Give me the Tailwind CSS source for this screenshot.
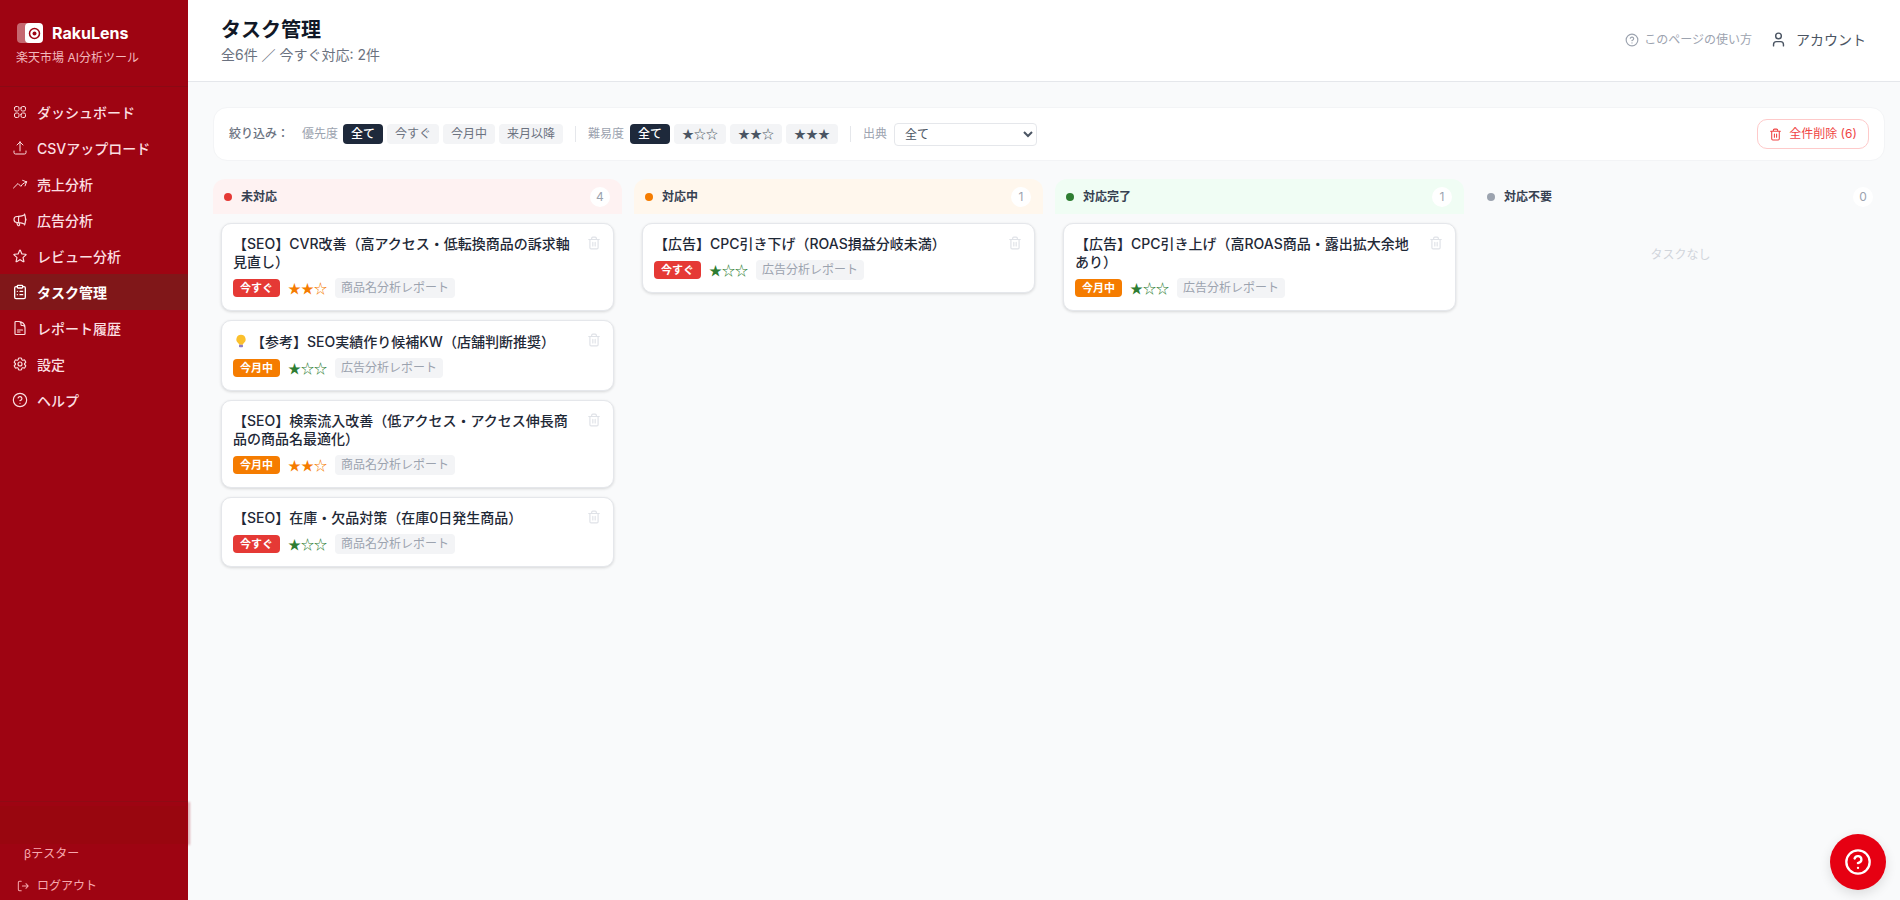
<!DOCTYPE html>
<html lang="ja">
<head>
<meta charset="utf-8">
<title>タスク管理</title>
<script src="https://cdn.jsdelivr.net/npm/@tailwindcss/browser@4"></script>
</head>
<body class="h-[900px] overflow-hidden bg-[#f9fafb] font-['Inter','Noto_Sans_CJK_JP',sans-serif] text-[#111827]">
<div class="relative flex h-[900px]">
  <aside class="flex h-full w-[188px] shrink-0 flex-col bg-[#9e0412] text-[#fde2e4]">
    <div class="h-[87px] shrink-0 border-b border-[#8a0a14] pl-[16px] pt-[23px]">
      <div class="ml-[1px] flex items-center gap-[9px]">
        <div class="relative h-[20px] w-[26px]">
          <div class="absolute left-0 top-0 h-[20px] w-[14px] rounded-[4px] bg-white/40"></div>
          <div class="absolute left-[8px] top-0 flex h-[20px] w-[18px] items-center justify-center rounded-[4px] bg-white">
            <svg viewBox="0 0 12 12" class="h-[13px] w-[13px]" fill="none"><circle cx="6" cy="6" r="4.6" stroke="#9e0412" stroke-width="1.4"/><circle cx="6" cy="6" r="1.8" fill="#9e0412"/></svg>
          </div>
        </div>
        <span class="text-[16px] font-bold leading-[20px] text-white">RakuLens</span>
      </div>
      <div class="mt-[7px] text-[12px] leading-[16px] text-[#f2b9bd]">楽天市場 AI分析ツール</div>
    </div>
    <nav class="flex flex-col pt-[7px] text-[14px] font-medium">
      <a class="flex h-[36px] items-center gap-[9px] pl-[12px] text-[#fbdfe1]"><svg viewBox="0 0 24 24" class="h-[16px] w-[16px]" fill="none" stroke="currentColor" stroke-width="1.5" stroke-linecap="round" stroke-linejoin="round"><path d="M3.75 6A2.25 2.25 0 0 1 6 3.75h2.25A2.25 2.25 0 0 1 10.5 6v2.25a2.25 2.25 0 0 1-2.25 2.25H6a2.25 2.25 0 0 1-2.25-2.25V6ZM3.75 15.75A2.25 2.25 0 0 1 6 13.5h2.25a2.25 2.25 0 0 1 2.25 2.25V18a2.25 2.25 0 0 1-2.25 2.25H6A2.25 2.25 0 0 1 3.75 18v-2.25ZM13.5 6a2.25 2.25 0 0 1 2.25-2.25H18A2.25 2.25 0 0 1 20.25 6v2.25A2.25 2.25 0 0 1 18 10.5h-2.25a2.25 2.25 0 0 1-2.25-2.25V6ZM13.5 15.75a2.25 2.25 0 0 1 2.25-2.25H18a2.25 2.25 0 0 1 2.25 2.25V18A2.25 2.25 0 0 1 18 20.25h-2.25A2.25 2.25 0 0 1 13.5 18v-2.25Z"/></svg>ダッシュボード</a>
      <a class="flex h-[36px] items-center gap-[9px] pl-[12px] text-[#fbdfe1]"><svg viewBox="0 0 24 24" class="h-[16px] w-[16px]" fill="none" stroke="currentColor" stroke-width="1.5" stroke-linecap="round" stroke-linejoin="round"><path d="M3 16.5v2.25A2.25 2.25 0 0 0 5.25 21h13.5A2.25 2.25 0 0 0 21 18.75V16.5m-13.5-9L12 3m0 0 4.5 4.5M12 3v13.5"/></svg>CSVアップロード</a>
      <a class="flex h-[36px] items-center gap-[9px] pl-[12px] text-[#fbdfe1]"><svg viewBox="0 0 24 24" class="h-[16px] w-[16px]" fill="none" stroke="currentColor" stroke-width="1.5" stroke-linecap="round" stroke-linejoin="round"><path d="M2.25 18 9 11.25l4.306 4.306a11.95 11.95 0 0 1 5.814-5.518l2.74-1.22m0 0-5.94-2.281m5.94 2.28-2.28 5.941"/></svg>売上分析</a>
      <a class="flex h-[36px] items-center gap-[9px] pl-[12px] text-[#fbdfe1]"><svg viewBox="0 0 24 24" class="h-[16px] w-[16px]" fill="none" stroke="currentColor" stroke-width="1.75" stroke-linecap="round" stroke-linejoin="round"><path d="M10.34 15.84c-.688-.06-1.386-.09-2.09-.09H7.5a4.5 4.5 0 1 1 0-9h.75c.704 0 1.402-.03 2.09-.09m0 9.18c.253.962.584 1.892.985 2.783.247.55.06 1.21-.463 1.511l-.657.38c-.551.318-1.26.117-1.527-.461a20.845 20.845 0 0 1-1.44-4.282m3.102.069a18.03 18.03 0 0 1-.59-4.59c0-1.586.205-3.124.59-4.59m0 9.18a23.848 23.848 0 0 1 8.835 2.535M10.34 6.66a23.847 23.847 0 0 0 8.835-2.535m0 0A23.74 23.74 0 0 0 18.795 3m.38 1.125a23.91 23.91 0 0 1 1.014 5.395m-1.014 8.855c-.118.38-.245.754-.38 1.125m.38-1.125a23.91 23.91 0 0 0 1.014-5.395m0-3.46c.495.413.811 1.035.811 1.73 0 .695-.316 1.317-.811 1.73m0-3.46a24.347 24.347 0 0 1 0 3.46"/></svg>広告分析</a>
      <a class="flex h-[36px] items-center gap-[9px] pl-[12px] text-[#fbdfe1]"><svg viewBox="0 0 24 24" class="h-[16px] w-[16px]" fill="none" stroke="currentColor" stroke-width="1.75" stroke-linecap="round" stroke-linejoin="round"><path d="M11.48 3.499a.562.562 0 0 1 1.04 0l2.125 5.111a.563.563 0 0 0 .475.345l5.518.442c.499.04.701.663.321.988l-4.204 3.602a.563.563 0 0 0-.182.557l1.285 5.385a.562.562 0 0 1-.84.61l-4.725-2.885a.562.562 0 0 0-.586 0L6.982 20.54a.562.562 0 0 1-.84-.61l1.285-5.386a.562.562 0 0 0-.182-.557l-4.204-3.602a.562.562 0 0 1 .321-.988l5.518-.442a.563.563 0 0 0 .475-.345L11.48 3.5Z"/></svg>レビュー分析</a>
      <a class="flex h-[36px] items-center gap-[9px] bg-[#801719] pl-[12px] font-bold text-white"><svg viewBox="0 0 24 24" class="h-[16px] w-[16px]" fill="none" stroke="currentColor" stroke-width="2" stroke-linecap="round" stroke-linejoin="round"><rect x="8" y="2" width="8" height="4" rx="1"/><path d="M16 4h2a2 2 0 0 1 2 2v14a2 2 0 0 1-2 2H6a2 2 0 0 1-2-2V6a2 2 0 0 1 2-2h2"/><path d="M12 11h4M12 16h4M8 11h.01M8 16h.01"/></svg>タスク管理</a>
      <a class="flex h-[36px] items-center gap-[9px] pl-[12px] text-[#fbdfe1]"><svg viewBox="0 0 24 24" class="h-[16px] w-[16px]" fill="none" stroke="currentColor" stroke-width="1.75" stroke-linecap="round" stroke-linejoin="round"><path d="M19.5 14.25v-2.625a3.375 3.375 0 0 0-3.375-3.375h-1.5A1.125 1.125 0 0 1 13.5 7.125v-1.5a3.375 3.375 0 0 0-3.375-3.375H8.25m0 12.75h7.5m-7.5 3H12M10.5 2.25H5.625c-.621 0-1.125.504-1.125 1.125v17.25c0 .621.504 1.125 1.125 1.125h12.75c.621 0 1.125-.504 1.125-1.125V11.25a9 9 0 0 0-9-9Z"/></svg>レポート履歴</a>
      <a class="flex h-[36px] items-center gap-[9px] pl-[12px] text-[#fbdfe1]"><svg viewBox="0 0 24 24" class="h-[16px] w-[16px]" fill="none" stroke="currentColor" stroke-width="1.75" stroke-linecap="round" stroke-linejoin="round"><path d="M9.594 3.94c.09-.542.56-.94 1.11-.94h2.593c.55 0 1.02.398 1.11.94l.213 1.281c.063.374.313.686.645.87.074.04.147.083.22.127.325.196.72.257 1.075.124l1.217-.456a1.125 1.125 0 0 1 1.37.49l1.296 2.247a1.125 1.125 0 0 1-.26 1.431l-1.003.827c-.293.241-.438.613-.43.992a7.723 7.723 0 0 1 0 .255c-.008.378.137.75.43.991l1.004.827c.424.35.534.955.26 1.43l-1.298 2.247a1.125 1.125 0 0 1-1.369.491l-1.217-.456c-.355-.133-.75-.072-1.076.124a6.47 6.47 0 0 1-.22.128c-.331.183-.581.495-.644.869l-.213 1.281c-.09.543-.56.94-1.11.94h-2.594c-.55 0-1.019-.398-1.11-.94l-.213-1.281c-.062-.374-.312-.686-.644-.87a6.52 6.52 0 0 1-.22-.127c-.325-.196-.72-.257-1.076-.124l-1.217.456a1.125 1.125 0 0 1-1.369-.49l-1.297-2.247a1.125 1.125 0 0 1 .26-1.431l1.004-.827c.292-.24.437-.613.43-.991a6.932 6.932 0 0 1 0-.255c.007-.38-.138-.751-.43-.992l-1.004-.827a1.125 1.125 0 0 1-.26-1.43l1.297-2.247a1.125 1.125 0 0 1 1.37-.491l1.216.456c.356.133.751.072 1.076-.124.072-.044.146-.086.22-.128.332-.183.582-.495.644-.869l.214-1.28Z"/><path d="M15 12a3 3 0 1 1-6 0 3 3 0 0 1 6 0Z"/></svg>設定</a>
      <a class="flex h-[36px] items-center gap-[9px] pl-[12px] text-[#fbdfe1]"><svg viewBox="0 0 24 24" class="h-[16px] w-[16px]" fill="none" stroke="currentColor" stroke-width="1.75" stroke-linecap="round" stroke-linejoin="round"><circle cx="12" cy="12" r="10"/><path d="M9.09 9a3 3 0 0 1 5.83 1c0 2-3 3-3 3M12 17h.01"/></svg>ヘルプ</a>
    </nav>
    <div class="mt-auto border-t border-[#8f0a14] pt-[4px]">
      <div class="h-[38px] w-[186px] bg-[#99060f]"></div>
      <div class="pl-[24px] pt-[1px] text-[12px] leading-[18px] text-[#f7a8ae]">βテスター</div>
      <div class="flex h-[37px] items-center gap-[7px] pb-[2px] pl-[16px] pt-[10px] text-[12px] text-[#f7a8ae]"><svg viewBox="0 0 24 24" class="h-[14px] w-[14px]" fill="none" stroke="currentColor" stroke-width="1.75" stroke-linecap="round" stroke-linejoin="round"><path d="M9 4H6a2 2 0 0 0-2 2v12a2 2 0 0 0 2 2h3M11 12h10M17 8l4 4-4 4"/></svg>ログアウト</div>
    </div>
  </aside>
  <div class="absolute left-[187px] top-[802px] h-[43px] w-[3px] bg-[#9e0412]/30 blur-[1px]"></div>

  <div class="flex min-w-0 flex-1 flex-col">
    <header class="flex h-[82px] shrink-0 items-center justify-between border-b border-[#e5e7eb] bg-white pl-[33px] pr-[34px]">
      <div class="-mt-[1px]">
        <h1 class="text-[20px] font-semibold leading-[28px] text-[#111827]">タスク管理</h1>
        <p class="mt-[1px] text-[14px] leading-[20px] text-[#6b7280]">全6件 ／ 今すぐ対応: 2件</p>
      </div>
      <div class="mb-[2px] flex items-center gap-[18px]">
        <div class="flex items-center gap-[5px] text-[12px] text-[#9ca3af]"><svg viewBox="0 0 24 24" class="h-[14px] w-[14px]" fill="none" stroke="currentColor" stroke-width="2" stroke-linecap="round" stroke-linejoin="round"><circle cx="12" cy="12" r="10"/><path d="M9.09 9a3 3 0 0 1 5.83 1c0 2-3 3-3 3M12 17h.01"/></svg>このページの使い方</div>
        <div class="flex items-center gap-[9px] text-[14px] text-[#4b5563]"><svg viewBox="0 0 24 24" class="h-[17px] w-[17px]" fill="none" stroke="currentColor" stroke-width="2" stroke-linecap="round" stroke-linejoin="round"><path d="M19 21v-2a4 4 0 0 0-4-4H9a4 4 0 0 0-4 4v2"/><circle cx="12" cy="7" r="4"/></svg>アカウント</div>
      </div>
    </header>

    <main class="min-h-0 flex-1 pl-[25px] pr-[15px] pt-[25px]">
      <div class="flex h-[54px] items-center rounded-[14px] border border-[#f3f4f6] bg-white pl-[15px] pr-[15px]">
        <span class="w-[73px] text-[12px] font-medium text-[#6b7280]">絞り込み：</span>
        <span class="mr-[5px] text-[12px] text-[#9ca3af]">優先度</span>
        <div class="flex gap-[4px] text-[12px]">
          <span class="flex h-[20px] w-[40px] items-center justify-center rounded-[4px] bg-[#1e293b] font-medium text-white">全て</span>
          <span class="flex h-[20px] w-[52px] items-center justify-center rounded-[4px] bg-[#f3f4f6] text-[#6b7280]">今すぐ</span>
          <span class="flex h-[20px] w-[52px] items-center justify-center rounded-[4px] bg-[#f3f4f6] text-[#6b7280]">今月中</span>
          <span class="flex h-[20px] w-[64px] items-center justify-center rounded-[4px] bg-[#f3f4f6] text-[#6b7280]">来月以降</span>
        </div>
        <span class="mx-[12px] h-[16px] w-px bg-[#e5e7eb]"></span>
        <span class="mr-[6px] text-[12px] text-[#9ca3af]">難易度</span>
        <div class="flex gap-[4px] text-[12px]">
          <span class="flex h-[20px] w-[40px] items-center justify-center rounded-[4px] bg-[#1e293b] font-medium text-white">全て</span>
          <span class="flex h-[20px] w-[52px] items-center justify-center rounded-[4px] bg-[#f3f4f6] font-['Noto_Sans_CJK_JP'] text-[#4b5563]">★☆☆</span>
          <span class="flex h-[20px] w-[52px] items-center justify-center rounded-[4px] bg-[#f3f4f6] font-['Noto_Sans_CJK_JP'] text-[#4b5563]">★★☆</span>
          <span class="flex h-[20px] w-[52px] items-center justify-center rounded-[4px] bg-[#f3f4f6] font-['Noto_Sans_CJK_JP'] text-[#4b5563]">★★★</span>
        </div>
        <span class="mx-[12px] h-[16px] w-px bg-[#e5e7eb]"></span>
        <span class="mr-[7px] text-[12px] text-[#9ca3af]">出典</span>
        <select class="h-[23px] w-[143px] rounded-[4px] border border-[#e5e7eb] bg-white px-[6px] text-[12px] text-[#4b5563]"><option>全て</option></select>
        <button class="ml-auto flex h-[30px] w-[112px] items-center justify-center gap-[7px] rounded-[10px] border border-[#fecaca] text-[12px] text-[#ef4444]"><svg viewBox="0 0 24 24" class="h-[13px] w-[13px]" fill="none" stroke="currentColor" stroke-width="2" stroke-linecap="round" stroke-linejoin="round"><path d="M3 6h18M19 6v14c0 1-1 2-2 2H7c-1 0-2-1-2-2V6M8 6V4c0-1 1-2 2-2h4c1 0 2 1 2 2v2M10 11v6M14 11v6"/></svg>全件削除 (6)</button>
      </div>

      <div class="mt-[18px] grid grid-cols-4 gap-[12px]">
        <section>
          <div class="flex h-[35px] items-center rounded-t-[12px] bg-[#fef2f2] pl-[11px] pr-[12px]">
            <span class="h-[8px] w-[8px] rounded-full bg-[#e53935]"></span>
            <span class="ml-[9px] text-[12px] font-semibold text-[#374151]">未対応</span>
            <span class="ml-auto flex h-[20px] w-[20px] items-center justify-center rounded-full bg-white text-[12px] text-[#9ca3af]">4</span>
          </div>
          <div class="flex flex-col gap-[9px] px-[8px] pt-[9px]">
            <article class="flex flex-col rounded-[10px] border border-[#e5e7eb] bg-white pb-[12px] pl-[11px] pr-[12px] pt-[11px] shadow-[0_1px_3px_rgba(0,0,0,0.14)]">
              <div class="flex items-start gap-[8px]"><h3 class="flex-1 text-[14px] font-medium leading-[18px] text-[#1f2937]">【SEO】CVR改善（高アクセス・低転換商品の訴求軸見直し）</h3><svg viewBox="0 0 24 24" class="mt-[1px] h-[14px] w-[14px] shrink-0" fill="none" stroke="#dfe2e7" stroke-width="2" stroke-linecap="round" stroke-linejoin="round"><path d="M3 6h18M19 6v14c0 1-1 2-2 2H7c-1 0-2-1-2-2V6M8 6V4c0-1 1-2 2-2h4c1 0 2 1 2 2v2M10 11v6M14 11v6"/></svg></div>
              <div class="mt-[7px] flex h-[20px] items-center gap-[8px]"><span class="flex h-[18px] w-[47px] items-center justify-center rounded-[4px] bg-[#e53935] text-[11px] font-bold text-white">今すぐ</span><span class="w-[39px] font-['Noto_Sans_CJK_JP'] text-[13px] text-[#f57c00]">★★☆</span><span class="flex h-[20px] items-center rounded-[4px] bg-[#f3f4f6] px-[6px] text-[12px] text-[#9ca3af]">商品名分析レポート</span></div>
            </article>
            <article class="flex flex-col rounded-[10px] border border-[#e5e7eb] bg-white pb-[12px] pl-[11px] pr-[12px] pt-[11px] shadow-[0_1px_3px_rgba(0,0,0,0.14)]">
              <div class="flex items-start gap-[8px]"><h3 class="flex flex-1 items-center text-[14px] font-medium leading-[19px] text-[#1f2937]"><svg viewBox="0 0 14 18" class="ml-[2px] mr-[4px] h-[15px] w-[12px]"><path d="M7 1a5.5 5.5 0 0 0-3.2 10c.6.5.9 1 1 1.8h4.4c.1-.8.4-1.3 1-1.8A5.5 5.5 0 0 0 7 1Z" fill="#fbc02d"/><rect x="4.6" y="13" width="4.8" height="3" rx="1" fill="#8e7cc3"/></svg>【参考】SEO実績作り候補KW（店舗判断推奨）</h3><svg viewBox="0 0 24 24" class="mt-[1px] h-[14px] w-[14px] shrink-0" fill="none" stroke="#dfe2e7" stroke-width="2" stroke-linecap="round" stroke-linejoin="round"><path d="M3 6h18M19 6v14c0 1-1 2-2 2H7c-1 0-2-1-2-2V6M8 6V4c0-1 1-2 2-2h4c1 0 2 1 2 2v2M10 11v6M14 11v6"/></svg></div>
              <div class="mt-[7px] flex h-[20px] items-center gap-[8px]"><span class="flex h-[18px] w-[47px] items-center justify-center rounded-[4px] bg-[#f57c00] text-[11px] font-bold text-white">今月中</span><span class="w-[39px] font-['Noto_Sans_CJK_JP'] text-[13px] text-[#2e7d32]">★☆☆</span><span class="flex h-[20px] items-center rounded-[4px] bg-[#f3f4f6] px-[6px] text-[12px] text-[#9ca3af]">広告分析レポート</span></div>
            </article>
            <article class="flex flex-col rounded-[10px] border border-[#e5e7eb] bg-white pb-[12px] pl-[11px] pr-[12px] pt-[11px] shadow-[0_1px_3px_rgba(0,0,0,0.14)]">
              <div class="flex items-start gap-[8px]"><h3 class="flex-1 text-[14px] font-medium leading-[18px] text-[#1f2937]">【SEO】検索流入改善（低アクセス・アクセス伸長商品の商品名最適化）</h3><svg viewBox="0 0 24 24" class="mt-[1px] h-[14px] w-[14px] shrink-0" fill="none" stroke="#dfe2e7" stroke-width="2" stroke-linecap="round" stroke-linejoin="round"><path d="M3 6h18M19 6v14c0 1-1 2-2 2H7c-1 0-2-1-2-2V6M8 6V4c0-1 1-2 2-2h4c1 0 2 1 2 2v2M10 11v6M14 11v6"/></svg></div>
              <div class="mt-[7px] flex h-[20px] items-center gap-[8px]"><span class="flex h-[18px] w-[47px] items-center justify-center rounded-[4px] bg-[#f57c00] text-[11px] font-bold text-white">今月中</span><span class="w-[39px] font-['Noto_Sans_CJK_JP'] text-[13px] text-[#f57c00]">★★☆</span><span class="flex h-[20px] items-center rounded-[4px] bg-[#f3f4f6] px-[6px] text-[12px] text-[#9ca3af]">商品名分析レポート</span></div>
            </article>
            <article class="flex flex-col rounded-[10px] border border-[#e5e7eb] bg-white pb-[12px] pl-[11px] pr-[12px] pt-[11px] shadow-[0_1px_3px_rgba(0,0,0,0.14)]">
              <div class="flex items-start gap-[8px]"><h3 class="flex-1 text-[14px] font-medium leading-[18px] text-[#1f2937]">【SEO】在庫・欠品対策（在庫0日発生商品）</h3><svg viewBox="0 0 24 24" class="mt-[1px] h-[14px] w-[14px] shrink-0" fill="none" stroke="#dfe2e7" stroke-width="2" stroke-linecap="round" stroke-linejoin="round"><path d="M3 6h18M19 6v14c0 1-1 2-2 2H7c-1 0-2-1-2-2V6M8 6V4c0-1 1-2 2-2h4c1 0 2 1 2 2v2M10 11v6M14 11v6"/></svg></div>
              <div class="mt-[7px] flex h-[20px] items-center gap-[8px]"><span class="flex h-[18px] w-[47px] items-center justify-center rounded-[4px] bg-[#e53935] text-[11px] font-bold text-white">今すぐ</span><span class="w-[39px] font-['Noto_Sans_CJK_JP'] text-[13px] text-[#2e7d32]">★☆☆</span><span class="flex h-[20px] items-center rounded-[4px] bg-[#f3f4f6] px-[6px] text-[12px] text-[#9ca3af]">商品名分析レポート</span></div>
            </article>
          </div>
        </section>

        <section>
          <div class="flex h-[35px] items-center rounded-t-[12px] bg-[#fff7ed] pl-[11px] pr-[12px]">
            <span class="h-[8px] w-[8px] rounded-full bg-[#f57c00]"></span>
            <span class="ml-[9px] text-[12px] font-semibold text-[#374151]">対応中</span>
            <span class="ml-auto flex h-[20px] w-[20px] items-center justify-center rounded-full bg-white text-[12px] text-[#9ca3af]">1</span>
          </div>
          <div class="flex flex-col gap-[9px] px-[8px] pt-[9px]">
            <article class="flex flex-col rounded-[10px] border border-[#e5e7eb] bg-white pb-[12px] pl-[11px] pr-[12px] pt-[11px] shadow-[0_1px_3px_rgba(0,0,0,0.14)]">
              <div class="flex items-start gap-[8px]"><h3 class="flex-1 text-[14px] font-medium leading-[18px] text-[#1f2937]">【広告】CPC引き下げ（ROAS損益分岐未満）</h3><svg viewBox="0 0 24 24" class="mt-[1px] h-[14px] w-[14px] shrink-0" fill="none" stroke="#dfe2e7" stroke-width="2" stroke-linecap="round" stroke-linejoin="round"><path d="M3 6h18M19 6v14c0 1-1 2-2 2H7c-1 0-2-1-2-2V6M8 6V4c0-1 1-2 2-2h4c1 0 2 1 2 2v2M10 11v6M14 11v6"/></svg></div>
              <div class="mt-[7px] flex h-[20px] items-center gap-[8px]"><span class="flex h-[18px] w-[47px] items-center justify-center rounded-[4px] bg-[#e53935] text-[11px] font-bold text-white">今すぐ</span><span class="w-[39px] font-['Noto_Sans_CJK_JP'] text-[13px] text-[#2e7d32]">★☆☆</span><span class="flex h-[20px] items-center rounded-[4px] bg-[#f3f4f6] px-[6px] text-[12px] text-[#9ca3af]">広告分析レポート</span></div>
            </article>
          </div>
        </section>

        <section>
          <div class="flex h-[35px] items-center rounded-t-[12px] bg-[#f0fdf4] pl-[11px] pr-[12px]">
            <span class="h-[8px] w-[8px] rounded-full bg-[#2e7d32]"></span>
            <span class="ml-[9px] text-[12px] font-semibold text-[#374151]">対応完了</span>
            <span class="ml-auto flex h-[20px] w-[20px] items-center justify-center rounded-full bg-white text-[12px] text-[#9ca3af]">1</span>
          </div>
          <div class="flex flex-col gap-[9px] px-[8px] pt-[9px]">
            <article class="flex flex-col rounded-[10px] border border-[#e5e7eb] bg-white pb-[12px] pl-[11px] pr-[12px] pt-[11px] shadow-[0_1px_3px_rgba(0,0,0,0.14)]">
              <div class="flex items-start gap-[8px]"><h3 class="flex-1 text-[14px] font-medium leading-[18px] text-[#1f2937]">【広告】CPC引き上げ（高ROAS商品・露出拡大余地あり）</h3><svg viewBox="0 0 24 24" class="mt-[1px] h-[14px] w-[14px] shrink-0" fill="none" stroke="#dfe2e7" stroke-width="2" stroke-linecap="round" stroke-linejoin="round"><path d="M3 6h18M19 6v14c0 1-1 2-2 2H7c-1 0-2-1-2-2V6M8 6V4c0-1 1-2 2-2h4c1 0 2 1 2 2v2M10 11v6M14 11v6"/></svg></div>
              <div class="mt-[7px] flex h-[20px] items-center gap-[8px]"><span class="flex h-[18px] w-[47px] items-center justify-center rounded-[4px] bg-[#f57c00] text-[11px] font-bold text-white">今月中</span><span class="w-[39px] font-['Noto_Sans_CJK_JP'] text-[13px] text-[#2e7d32]">★☆☆</span><span class="flex h-[20px] items-center rounded-[4px] bg-[#f3f4f6] px-[6px] text-[12px] text-[#9ca3af]">広告分析レポート</span></div>
            </article>
          </div>
        </section>

        <section>
          <div class="flex h-[35px] items-center rounded-t-[12px] bg-[#f9fafb] pl-[11px] pr-[12px]">
            <span class="h-[8px] w-[8px] rounded-full bg-[#9ca3af]"></span>
            <span class="ml-[9px] text-[12px] font-semibold text-[#374151]">対応不要</span>
            <span class="ml-auto flex h-[20px] w-[20px] items-center justify-center rounded-full bg-white text-[12px] text-[#9ca3af]">0</span>
          </div>
          <div class="pt-[33px] text-center text-[12px] leading-[16px] text-[#d1d5db]">タスクなし</div>
        </section>
      </div>
    </main>
  </div>

  <button class="absolute bottom-[10px] right-[14px] flex h-[56px] w-[56px] items-center justify-center rounded-full bg-[#e60012] text-white shadow-[0_4px_12px_rgba(0,0,0,0.12)]"><svg viewBox="0 0 24 24" class="h-[28px] w-[28px]" fill="none" stroke="currentColor" stroke-width="2" stroke-linecap="round" stroke-linejoin="round"><circle cx="12" cy="12" r="10"/><path d="M9.09 9a3 3 0 0 1 5.83 1c0 2-3 3-3 3M12 17h.01"/></svg></button>
</div>
</body>
</html>
